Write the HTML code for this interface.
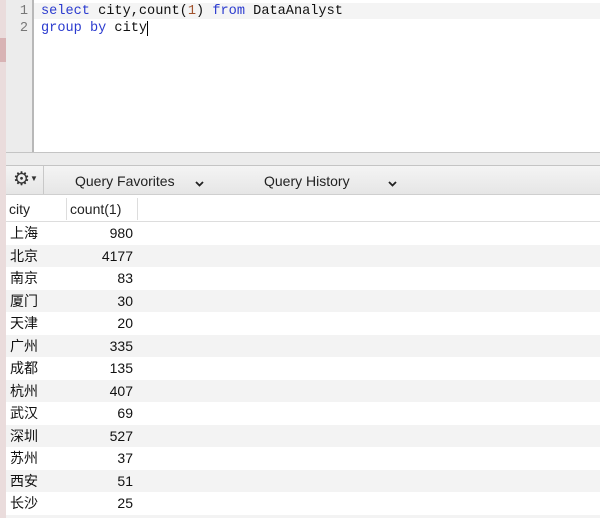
<!DOCTYPE html>
<html style="overflow:hidden;height:518px"><head><meta charset="utf-8"><style>
body{margin:0;width:600px;height:518px;overflow:hidden;background:#fff;position:relative;font-family:"Liberation Sans","Noto Sans CJK SC",sans-serif}
div{position:absolute;box-sizing:border-box}
.mono{font-family:"Liberation Mono","DejaVu Sans Mono",monospace;font-size:13.6px}
.kw{color:#2b3bcf}
.row{left:6px;width:594px;height:22.5px;font-size:14px;color:#111;line-height:22px}
.row span{position:absolute;top:0}
.c1{left:4px}.c2{left:60px;width:67px;text-align:right}
</style></head><body>
<div style="left:0;top:0;width:6px;height:518px;background:#eadcdc"></div>
<div style="left:0;top:38px;width:6px;height:24px;background:#d8b3b4"></div>
<div style="left:6px;top:0;width:28px;height:152px;background:#ececec;border-right:2px solid #b8b8b8"></div>
<div style="left:34px;top:3px;width:566px;height:16px;background:#f4f4f4"></div>
<div class="mono" style="left:6px;top:3px;width:22px;text-align:right;color:#777;line-height:17px">1<br>2</div>
<div class="mono" style="left:41px;top:3px;line-height:17px;color:#111;white-space:pre"><span class="kw">select</span> city,count(<span style="color:#a0522d">1</span>) <span class="kw">from</span> DataAnalyst
<span class="kw">group by</span> city<span style="border-left:1px solid #000"></span></div>
<div style="left:6px;top:152px;width:594px;height:14px;background:#ececec;border-top:1px solid #c4c4c4;border-bottom:1px solid #c4c4c4"></div>
<div style="left:6px;top:166px;width:594px;height:29px;background:linear-gradient(#f4f4f4,#e6e6e6);border-bottom:1px solid #cfcfcf;font-size:14px;color:#222">
<div style="left:0;top:0;width:38px;height:28px;border-right:1px solid #c8c8c8"></div>
<div style="left:7px;top:1px;font-size:19px;color:#333;line-height:24px">⚙<span style="font-size:8px;vertical-align:4px">▼</span></div>
<div style="left:69px;top:7px">Query Favorites</div>
<div style="left:189px;top:8px;width:8px;height:8px"><svg width="9" height="6"><path d="M1 1L4.5 4.5L8 1" stroke="#222" stroke-width="1.8" fill="none"/></svg></div>
<div style="left:258px;top:7px">Query History</div>
<div style="left:382px;top:8px;width:8px;height:8px"><svg width="9" height="6"><path d="M1 1L4.5 4.5L8 1" stroke="#222" stroke-width="1.8" fill="none"/></svg></div>
</div>
<div style="left:6px;top:195px;width:594px;height:27px;border-bottom:1px solid #ddd;font-size:14px;color:#222">
<div style="left:3px;top:6px">city</div>
<div style="left:60px;top:3px;height:22px;border-left:1px solid #ddd"></div>
<div style="left:64px;top:6px">count(1)</div>
<div style="left:131px;top:3px;height:22px;border-left:1px solid #ddd"></div>
</div>
<div class="row" style="top:222px"><span class="c1">上海</span><span class="c2">980</span></div>
<div class="row" style="top:244.5px;background:#f3f3f3"><span class="c1">北京</span><span class="c2">4177</span></div>
<div class="row" style="top:267px"><span class="c1">南京</span><span class="c2">83</span></div>
<div class="row" style="top:289.5px;background:#f3f3f3"><span class="c1">厦门</span><span class="c2">30</span></div>
<div class="row" style="top:312px"><span class="c1">天津</span><span class="c2">20</span></div>
<div class="row" style="top:334.5px;background:#f3f3f3"><span class="c1">广州</span><span class="c2">335</span></div>
<div class="row" style="top:357px"><span class="c1">成都</span><span class="c2">135</span></div>
<div class="row" style="top:379.5px;background:#f3f3f3"><span class="c1">杭州</span><span class="c2">407</span></div>
<div class="row" style="top:402px"><span class="c1">武汉</span><span class="c2">69</span></div>
<div class="row" style="top:424.5px;background:#f3f3f3"><span class="c1">深圳</span><span class="c2">527</span></div>
<div class="row" style="top:447px"><span class="c1">苏州</span><span class="c2">37</span></div>
<div class="row" style="top:469.5px;background:#f3f3f3"><span class="c1">西安</span><span class="c2">51</span></div>
<div class="row" style="top:492px"><span class="c1">长沙</span><span class="c2">25</span></div>
<div class="row" style="top:514.5px;height:3.5px;background:#f3f3f3"></div>
</body></html>
